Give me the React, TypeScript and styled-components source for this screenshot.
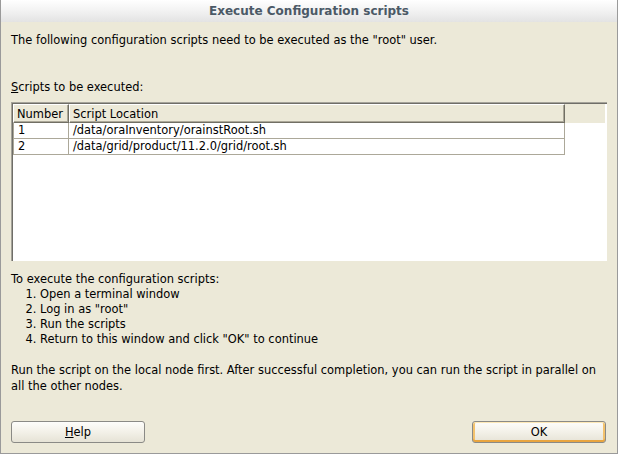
import styled, { createGlobalStyle } from "styled-components";

const GlobalStyle = createGlobalStyle`
  html, body {
    margin: 0;
    padding: 0;
    background: #ece9d8;
  }
  * {
    box-sizing: border-box;
  }
`;

const Window = styled.div`
  width: 618px;
  height: 454px;
  display: flex;
  flex-direction: column;
  background: #ece9d8;
  border: 1px solid #9a9a9a;
  border-top: none;
  font-family: "DejaVu Sans", sans-serif;
  font-size: 11.45px;
  color: #000;
`;

const TitleBar = styled.div`
  flex: none;
  height: 22px;
  display: flex;
  align-items: center;
  justify-content: center;
  background: linear-gradient(#ffffff, #f2f2f2 50%, #e3e3e3);
  color: #4b5966;
  font-weight: bold;
  font-size: 12px;
`;

const Body = styled.div`
  flex: 1;
  display: flex;
  flex-direction: column;
  padding: 0 9px 10px 10px;
`;

const Intro = styled.div`
  margin-top: 11px;
  line-height: 15px;
`;

const Label = styled.div`
  margin-top: 32px;
  line-height: 15px;
`;

const Mnemonic = styled.span`
  text-decoration: underline;
`;

const ScrollPane = styled.div`
  margin-top: 7px;
  width: 596px;
  height: 159px;
  flex: none;
  background: #fff;
  border-top: 1px solid #a5a39a;
  border-left: 1px solid #a5a39a;
  box-shadow: inset 1px 1px 0 #6f6e68;
  padding: 1px 0 0 1px;
  display: flex;
  flex-direction: column;
`;

const HeaderBar = styled.div`
  display: flex;
  width: 592px;
  height: 19px;
  background: #ece9d8;
`;

const HeadCell = styled.div<{ $w: number }>`
  width: ${(p) => p.$w}px;
  flex: none;
  display: flex;
  align-items: center;
  padding: 0 3px;
  border-top: 1px solid #fff;
  border-left: 1px solid #fff;
  border-right: 1px solid #716f64;
  border-bottom: 1px solid #716f64;
  box-shadow: inset -1px -1px 0 #aca899;
`;

const Row = styled.div`
  display: flex;
  height: 16px;
`;

const Cell = styled.div<{ $first?: boolean; $w: number }>`
  width: ${(p) => p.$w}px;
  flex: none;
  padding: 0 4px;
  line-height: 15px;
  border-right: 1px solid #aca899;
  border-bottom: 1px solid #aca899;
  border-left: ${(p) => (p.$first ? "1px solid #aca899" : "none")};
`;

const Instructions = styled.div`
  margin-top: 10px;
  line-height: 16px;
`;

const Steps = styled.ol`
  margin: 0;
  padding-left: 29px;
  line-height: 15px;
`;

const Note = styled.div`
  margin-top: 15px;
  line-height: 16px;
`;

const ButtonRow = styled.div`
  margin-top: auto;
  display: flex;
  justify-content: space-between;
  width: 596px;
  padding-right: 1px;
`;

const Button = styled.button<{ $default?: boolean }>`
  width: 134px;
  height: 22px;
  padding: 0;
  border: 1px solid #8a8a86;
  border-radius: 3px;
  background: linear-gradient(#fdfdfb, #f4f2ea 45%, #e6e3d6);
  font-family: "DejaVu Sans", sans-serif;
  font-size: 11.45px;
  color: #000;
  box-shadow: ${(p) =>
    p.$default
      ? "inset 0 1px 0 #fde8b6, inset 0 -2px 0 #e9a53f, inset 2px 0 0 #f3c26d, inset -2px 0 0 #f3c26d"
      : "none"};
`;

const scripts = [
  { n: "1", path: "/data/oraInventory/orainstRoot.sh" },
  { n: "2", path: "/data/grid/product/11.2.0/grid/root.sh" },
];

const App = () => {
  return (
    <>
      <GlobalStyle />
      <Window>
        <TitleBar>Execute Configuration scripts</TitleBar>
        <Body>
          <Intro>The following configuration scripts need to be executed as the "root" user.</Intro>
          <Label>
            <Mnemonic>S</Mnemonic>cripts to be executed:
          </Label>
          <ScrollPane>
            <HeaderBar>
              <HeadCell $w={56}>Number</HeadCell>
              <HeadCell $w={496}>Script Location</HeadCell>
            </HeaderBar>
            {scripts.map((s) => (
              <Row key={s.n}>
                <Cell $first $w={56}>{s.n}</Cell>
                <Cell $w={496}>{s.path}</Cell>
              </Row>
            ))}
          </ScrollPane>
          <Instructions>To execute the configuration scripts:</Instructions>
          <Steps>
            <li>Open a terminal window</li>
            <li>Log in as "root"</li>
            <li>Run the scripts</li>
            <li>Return to this window and click "OK" to continue</li>
          </Steps>
          <Note>
            Run the script on the local node first. After successful completion, you can run the script in parallel on all the other nodes.
          </Note>
          <ButtonRow>
            <Button>
              <Mnemonic>H</Mnemonic>elp
            </Button>
            <Button $default>OK</Button>
          </ButtonRow>
        </Body>
      </Window>
    </>
  );
};

export default App;
